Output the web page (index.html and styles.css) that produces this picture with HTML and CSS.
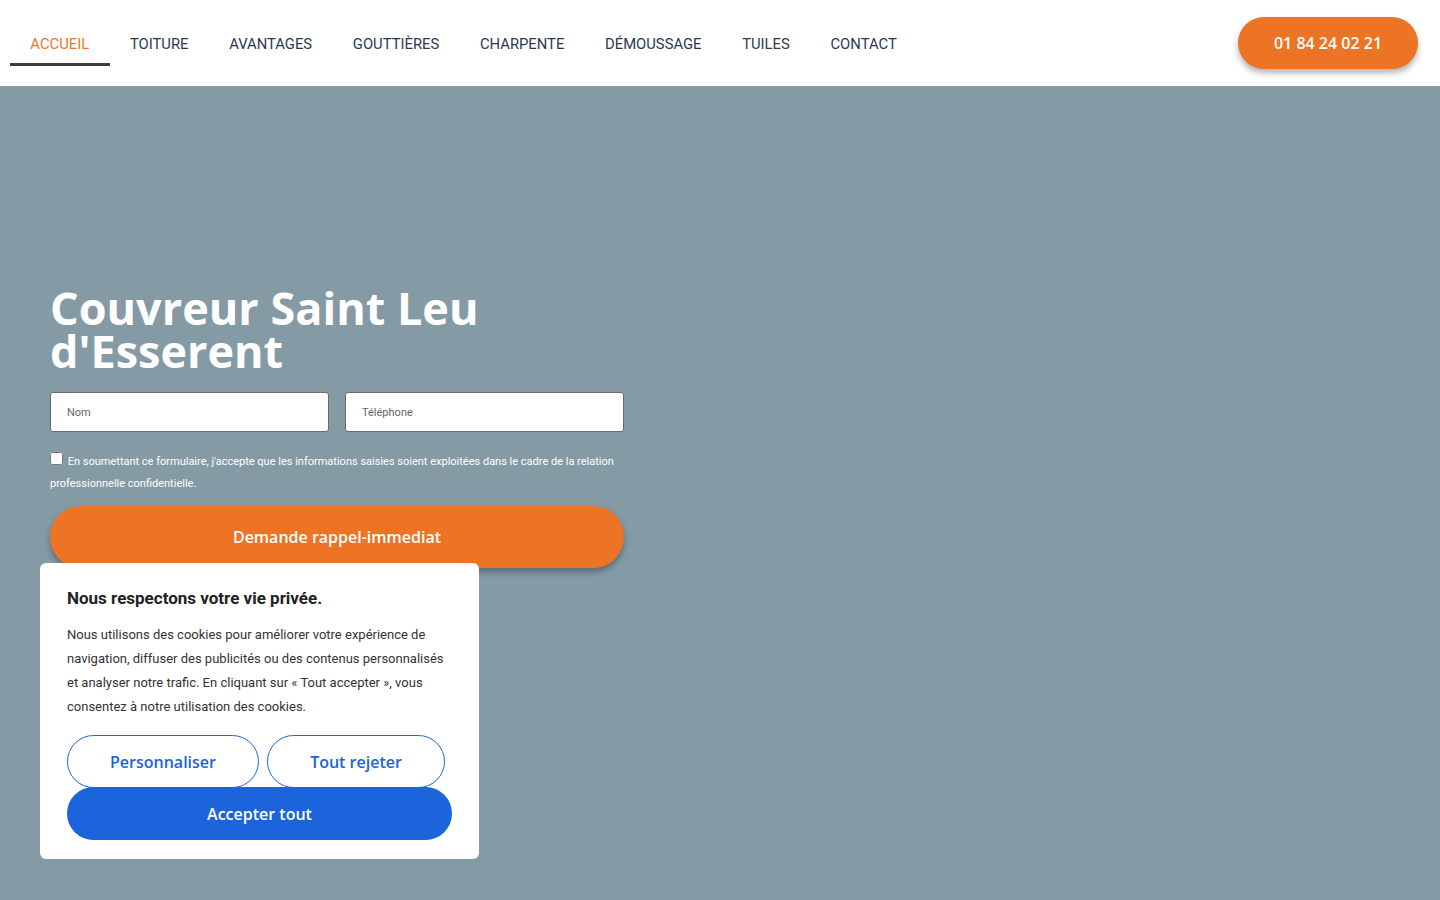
FILE: index.html
```html
<!DOCTYPE html>
<html lang="fr">
<head>
    <meta charset="UTF-8">
    <meta name="viewport" content="width=device-width, initial-scale=1.0">
    <title>Couvreur Saint Leu d'Esserent</title>
    <link rel="stylesheet" href="styles.css">
</head>
<body>
    <header class="header">
        <nav class="nav">
            <a href="#" class="nav-link active">ACCUEIL</a>
            <a href="#" class="nav-link">TOITURE</a>
            <a href="#" class="nav-link">AVANTAGES</a>
            <a href="#" class="nav-link">GOUTTIÈRES</a>
            <a href="#" class="nav-link">CHARPENTE</a>
            <a href="#" class="nav-link">DÉMOUSSAGE</a>
            <a href="#" class="nav-link">TUILES</a>
            <a href="#" class="nav-link">CONTACT</a>
        </nav>
        <a href="tel:0184240221" class="phone-btn">01 84 24 02 21</a>
    </header>

    <section class="hero">
        <div class="hero-inner">
            <h1>Couvreur Saint Leu d'Esserent</h1>
            <form class="callback-form">
                <div class="form-row">
                    <input type="text" placeholder="Nom">
                    <input type="tel" placeholder="Téléphone">
                </div>
                <label class="consent">
                    <input type="checkbox">
                    En soumettant ce formulaire, j'accepte que les informations saisies soient exploitées dans le cadre de la relation professionnelle confidentielle.
                </label>
                <button type="button" class="submit-btn">Demande rappel-immediat</button>
            </form>
        </div>
    </section>

    <section class="content"></section>

    <div class="cookie-box">
        <h2>Nous respectons votre vie privée.</h2>
        <p>Nous utilisons des cookies pour améliorer votre expérience de navigation, diffuser des publicités ou des contenus personnalisés et analyser notre trafic. En cliquant sur « Tout accepter », vous consentez à notre utilisation des cookies.</p>
        <div class="cookie-actions">
            <button type="button" class="cookie-btn outline wide">Personnaliser</button>
            <button type="button" class="cookie-btn outline">Tout rejeter</button>
            <button type="button" class="cookie-btn filled">Accepter tout</button>
        </div>
    </div>
</body>
</html>
```

FILE: styles.css
```css
html {
    overflow-y: scroll;
}

body {
    margin: 0;
    font-family: Roboto, "Liberation Sans", sans-serif;
    background-color: #849ba5;
}

.header {
    height: 86px;
    background-color: white;
    display: flex;
    align-items: center;
    justify-content: space-between;
    padding: 0 22px 0 10px;
}

.nav {
    display: flex;
    align-self: stretch;
}

.nav-link {
    display: flex;
    align-items: center;
    padding: 4px 20.35px 0;
    font-size: 14.8px;
    color: #2b3a4f;
    text-decoration: none;
    border-bottom: 3px solid transparent;
    margin: 20px 0;
}

.nav-link.active {
    color: #e8792c;
    border-bottom-color: #3a3d42;
}

.phone-btn {
    display: flex;
    align-items: center;
    justify-content: center;
    width: 180px;
    height: 52px;
    border-radius: 26px;
    background-color: #ec7424;
    color: white;
    font-family: "Open Sans", sans-serif;
    font-weight: 600;
    font-size: 16px;
    text-decoration: none;
    box-shadow: 0 4px 6px rgba(0, 0, 0, 0.3);
    margin-top: -1px;
}

.hero {
    background-color: #849ba5;
    padding: 200px 50px 200px;
}

.hero-inner {
    width: 574px;
}

h1 {
    margin: 0 0 20px;
    font-family: "Open Sans", sans-serif;
    font-weight: 700;
    font-size: 45px;
    line-height: 43px;
    color: white;
    width: 470px;
}

.callback-form {
    display: flex;
    flex-direction: column;
}

.form-row {
    display: flex;
    gap: 16px;
}

.form-row input {
    flex: 1;
    min-width: 0;
    height: 40px;
    box-sizing: border-box;
    border: 1px solid #6b6b6b;
    border-radius: 3px;
    padding: 0 16px;
    font-family: Roboto, sans-serif;
    font-size: 11px;
    background: white;
}

.form-row input::placeholder {
    color: #666;
}

.consent {
    margin-top: 19px;
    font-size: 11px;
    line-height: 22px;
    color: white;
}

.consent input {
    margin: 0 2px 0 0;
    width: 13px;
    height: 13px;
    vertical-align: 0;
}

.submit-btn {
    margin-top: 11px;
    height: 62px;
    border: none;
    border-radius: 31px;
    background-color: #ec7424;
    color: white;
    font-family: "Open Sans", sans-serif;
    font-weight: 600;
    font-size: 16px;
    box-shadow: 0 4px 6px rgba(0, 0, 0, 0.3);
    cursor: pointer;
}

.content {
    height: 5800px;
    background-color: #849ba5;
}

.cookie-box {
    position: fixed;
    left: 40px;
    bottom: 41px;
    width: 439px;
    box-sizing: border-box;
    padding: 24px 27px 19px;
    background-color: white;
    border-radius: 6px;
    color: #222;
}

.cookie-box h2 {
    margin: 0 0 14px;
    font-family: Roboto, sans-serif;
    font-size: 17px;
    font-weight: 700;
    line-height: 22px;
}

.cookie-box p {
    margin: 0 0 16px;
    font-size: 13px;
    line-height: 24px;
    color: #333;
}

.cookie-actions {
    display: flex;
    flex-wrap: wrap;
    column-gap: 8px;
}

.cookie-btn {
    height: 53px;
    border-radius: 27px;
    font-family: "Open Sans", sans-serif;
    font-weight: 600;
    font-size: 16px;
    cursor: pointer;
}

.cookie-btn.outline {
    width: 178px;
    background: white;
    color: #1b64dc;
    border: 1px solid #1b64dc;
}

.cookie-btn.outline.wide {
    width: 192px;
}

.cookie-btn.filled {
    width: 386px;
    margin-top: -1px;
    background: #1b64dc;
    color: white;
    border: none;
}
```
